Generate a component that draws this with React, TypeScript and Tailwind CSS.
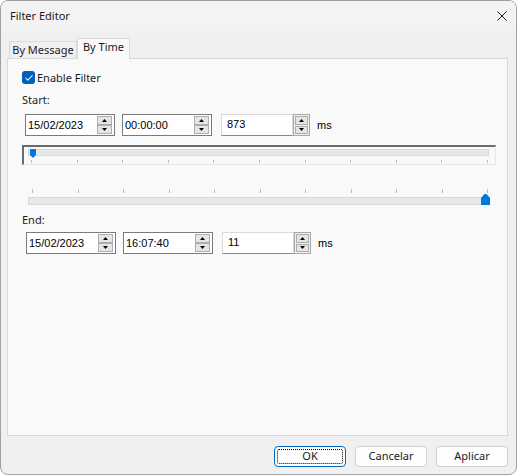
import { Check } from 'lucide-react'

const ui = "font-['Segoe_UI','Noto_Sans',sans-serif] text-[11px] text-[#1b1b1b] whitespace-nowrap"
const classic = "font-['Liberation_Sans',Arial,sans-serif] text-[11px] text-black"

const ticks = Array.from({ length: 11 }, (_, i) => i)

function Arrow({ up }: { up?: boolean }) {
  return (
    <svg width="5" height="3" viewBox="0 0 5 3" className="block">
      <path d={up ? 'M2.5 0L5 3H0z' : 'M0 0h5L2.5 3z'} fill="#000" />
    </svg>
  )
}

function SpinButton({ up }: { up?: boolean }) {
  return (
    <div className="flex-1 flex items-center justify-center border border-[#adadad] bg-[#e5e5e5]">
      <Arrow up={up} />
    </div>
  )
}

// date / time picker: field and spinner in one bordered box
function Picker({ value, className = '' }: { value: string; className?: string }) {
  return (
    <div className={`h-[22px] w-[90px] flex items-stretch border border-[#7a7a7a] bg-white ${className}`}>
      <div className={`flex-1 flex items-center pl-[2px] ${classic}`}>{value}</div>
      <div className="w-[15px] my-[1px] mr-[2px] flex flex-col">
        <SpinButton up />
        <SpinButton />
      </div>
    </div>
  )
}

// numeric up-down: white field with a separate spinner column
function Numeric({ value, className = '' }: { value: string; className?: string }) {
  return (
    <div className={`h-[22px] w-[89px] flex items-stretch ${className}`}>
      <div className={`flex-1 flex items-center pl-[5px] pb-[2px] bg-white border border-[#d9d9d9] border-b-[#8a8a8a] ${classic}`}>
        {value}
      </div>
      <div className="w-[17px] flex flex-col gap-[1px] p-[1px] border border-[#a8a8a8] bg-[#f0f0f0]">
        <SpinButton up />
        <SpinButton />
      </div>
    </div>
  )
}

function Ticks({ className = '' }: { className?: string }) {
  return (
    <div className={`flex justify-between ${className}`}>
      {ticks.map((t) => (
        <div key={t} className="w-px h-full bg-[#bdbdbd]" />
      ))}
    </div>
  )
}

function TimeRow({ date, time, ms, className = '' }: { date: string; time: string; ms: string; className?: string }) {
  return (
    <div className={`flex items-center ${className}`}>
      <Picker value={date} />
      <Picker value={time} className="ml-[7px]" />
      <Numeric value={ms} className="ml-[9px]" />
      <span className={`ml-[7px] ${classic}`}>ms</span>
    </div>
  )
}

function DialogButton({ label, primary }: { label: string; primary?: boolean }) {
  return (
    <div
      className={`relative w-[72px] h-[21px] flex items-center justify-center rounded-[4px] bg-[#fdfdfd] border ${
        primary ? 'border-[#0067c0]' : 'border-[#d0d0d0]'
      } ${ui}`}
    >
      {primary && <div className="absolute inset-[2px] border border-dotted border-black rounded-[2px]" />}
      {label}
    </div>
  )
}

export default function App() {
  return (
    <div className="w-[517px] h-[475px] flex flex-col border border-[#a0a0a0] rounded-lg overflow-hidden bg-[#f0f0f0]">
      {/* title bar */}
      <div className="h-[30px] shrink-0 flex items-center justify-between pl-[9px] pr-[9px] bg-[#f3f3f3]">
        <span className={ui}>Filter Editor</span>
        <svg width="10" height="10" viewBox="0 0 10 10">
          <path d="M0.5 0.5l9 9M9.5 0.5l-9 9" stroke="#1b1b1b" strokeWidth="1" />
        </svg>
      </div>

      <div className="flex-1 flex flex-col pl-[6px] pr-[8px] pt-[7px]">
        {/* tabs */}
        <div className="h-[20px] flex items-end pl-[2px]">
          <div className={`h-[17px] w-[68px] flex items-center justify-center border border-b-0 border-[#d9d9d9] bg-[#f0f0f0] ${ui}`}>
            By Message
          </div>
          <div className={`relative z-10 -mb-px h-[21px] w-[53px] flex items-center justify-center pb-[3px] border border-b-0 border-[#d9d9d9] bg-[#f9f9f9] ${ui}`}>
            By Time
          </div>
        </div>

        {/* tab page */}
        <div className="h-[378px] flex flex-col border border-[#d9d9d9] bg-[#f9f9f9]">
          <div className="mt-[12px] ml-[14px] flex items-center">
            <div className="w-[13px] h-[13px] rounded-[3px] bg-[#005fb8] flex items-center justify-center">
              <Check className="w-[10px] h-[10px] text-white" strokeWidth={2.5} />
            </div>
            <span className={`ml-[2px] leading-[13px] ${ui}`}>Enable Filter</span>
          </div>

          <div className={`mt-[9px] ml-[14px] h-[14px] leading-[14px] ${ui}`}>Start:</div>

          <TimeRow date="15/02/2023" time="00:00:00" ms="873" className="mt-[7px] ml-[17px]" />

          {/* start trackbar, inside a sunken frame */}
          <div className="mt-[9px] ml-[14px] w-[474px] h-[20px] border-t-2 border-l-2 border-t-[#6b6b6b] border-l-[#6b6b6b] border-r border-b border-r-[#e6e6e6] border-b-[#e6e6e6]">
            <div className="relative mt-[2px] ml-[4px] w-[461px] h-[7px] border border-[#d6d9d9] bg-[#e6e9e9]">
              <svg width="6" height="9" viewBox="0 0 6 9" className="absolute left-[1px] -top-px">
                <path d="M0 1a1 1 0 0 1 1-1h4a1 1 0 0 1 1 1v5L3 9 0 6z" fill="#0078d7" />
              </svg>
            </div>
            <Ticks className="mt-[4px] ml-[7px] w-[457px] h-[3px]" />
          </div>

          {/* end trackbar */}
          <Ticks className="mt-[24px] ml-[24px] w-[456px] h-[4px]" />
          <div className="relative mt-[4px] ml-[20px] w-[462px] h-[8px] border border-[#d6d9d9] bg-[#e6e9e9]">
            <svg width="9" height="11" viewBox="0 0 9 11" className="absolute right-[-1px] top-[-4px]">
              <path d="M0 4L3.5 0h2L9 4v7H0z" fill="#0078d7" />
            </svg>
          </div>

          <div className={`mt-[8px] ml-[14px] h-[14px] leading-[14px] ${ui}`}>End:</div>

          <TimeRow date="15/02/2023" time="16:07:40" ms="11" className="mt-[5px] ml-[18px]" />
        </div>

        {/* dialog buttons */}
        <div className="mt-[10px] flex justify-end gap-[9px]">
          <DialogButton label="OK" primary />
          <DialogButton label="Cancelar" />
          <DialogButton label="Aplicar" />
        </div>
      </div>
    </div>
  )
}
